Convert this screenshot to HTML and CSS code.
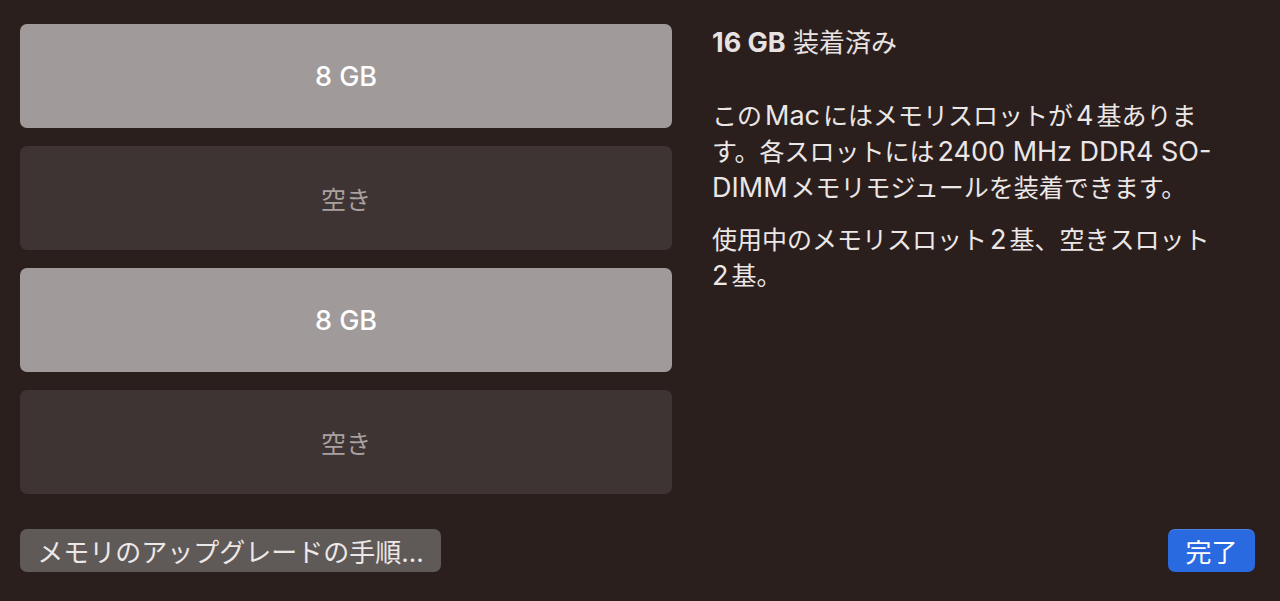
FILE: index.html
```html
<!DOCTYPE html>
<html lang="ja">
<head>
<meta charset="utf-8">
<title>メモリ</title>
<link rel="stylesheet" href="styles.css">
</head>
<body>
<div class="sheet">
  <div class="top">
    <div class="slots">
      <div class="slot filled">8 GB</div>
      <div class="slot empty">空き</div>
      <div class="slot filled">8 GB</div>
      <div class="slot empty">空き</div>
    </div>
    <div class="info">
      <div class="heading"><b class="lat">16 GB</b> 装着済み</div>
      <p class="para first">この<span class="lat">Mac</span>にはメモリスロットが<span class="lat">4</span>基ありま<br>す。各スロットには<span class="lat">2400 MHz DDR4 SO-</span><br><span class="lat first-col">DIMM</span>メモリモジュールを装着できます。</p>
      <p class="para">使用中のメモリスロット<span class="lat">2</span>基、空きスロット<br><span class="lat first-col">2</span>基。</p>
    </div>
  </div>
  <div class="footer">
    <button class="btn secondary">メモリのアップグレードの手順...</button>
    <button class="btn primary">完了</button>
  </div>
</div>
</body>
</html>
```
FILE: styles.css
```css
html, body {
  margin: 0;
  padding: 0;
  background: #2b1f1e;
  height: 100%;
}
body {
  font-family: "Inter", "Noto Sans CJK JP", sans-serif;
  color: #e8e3e2;
  overflow: hidden;
}
.sheet {
  padding: 24px 25px 0 20px;
}
.top {
  display: flex;
  gap: 40px;
}
.slots {
  width: 652px;
  flex: none;
  display: flex;
  flex-direction: column;
  gap: 18px;
}
.slot {
  height: 104px;
  border-radius: 7px;
  display: flex;
  align-items: center;
  justify-content: center;
}
.slot.filled {
  background: #a09b9a;
  color: #ffffff;
  font-weight: 500;
  font-size: 27px;
}
.slot.empty {
  background: #3e3433;
  color: #a9a19f;
  font-size: 25px;
}
.info {
  flex: 1;
  padding-top: 1px;
}
.heading {
  font-size: 26px;
  line-height: 36px;
  color: #e8e3e2;
  white-space: nowrap;
}
.heading b {
  font-weight: 700;
  font-size: 27px;
  margin: 0;
}
.para {
  margin: 16px 0 0 0;
  font-size: 25px;
  line-height: 36px;
  white-space: nowrap;
  color: #ebe7e6;
}
.para.first {
  margin-top: 37px;
}
.lat {
  font-size: 27px;
  margin: 0 3px;
}
.lat.first-col {
  margin-left: 0;
}
.footer {
  margin-top: 35px;
  display: flex;
  justify-content: space-between;
  align-items: center;
}
.btn {
  font-family: "Inter", "Noto Sans CJK JP", sans-serif;
  border: none;
  height: 43px;
  border-radius: 7px;
  font-size: 26px;
  padding: 0;
  display: flex;
  align-items: center;
  justify-content: center;
}
.btn.secondary {
  width: 421px;
  background: #5f5957;
  color: #ece8e7;
}
.btn.primary {
  width: 87px;
  background: #2a6ae0;
  color: #ffffff;
  box-shadow: inset 0 1px 0 rgba(255,255,255,0.15);
}
```
